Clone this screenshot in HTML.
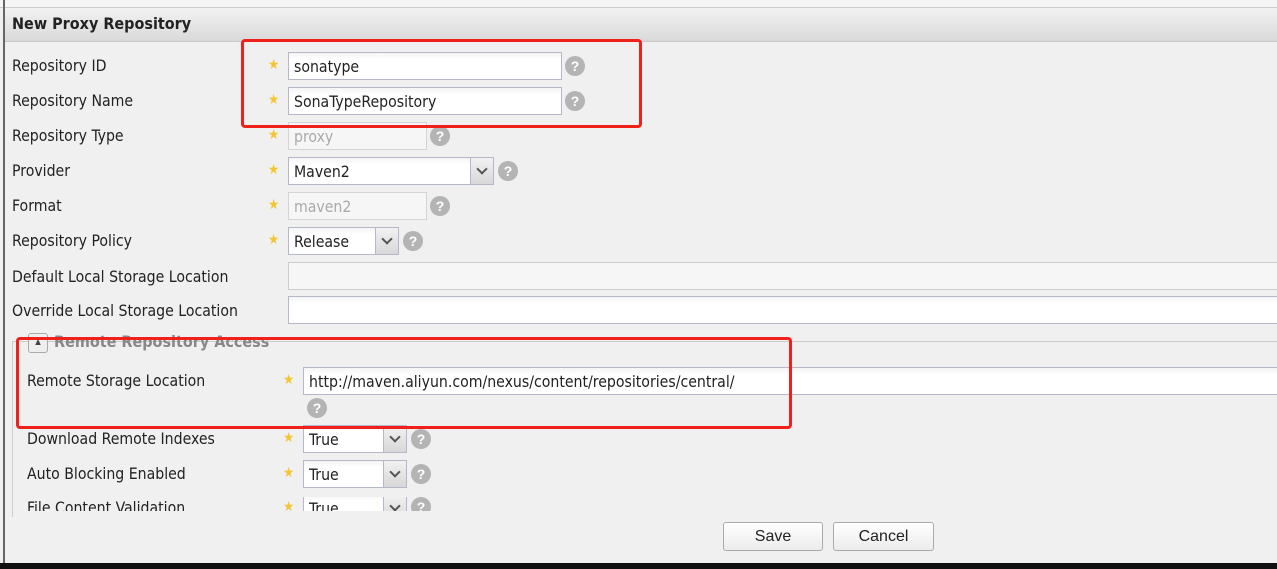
<!DOCTYPE html>
<html><head><style>
body{margin:0;width:1277px;height:569px;background:#f0f0f0;position:relative;overflow:hidden;font-family:"DejaVu Sans Condensed","Liberation Sans",sans-serif;font-size:15.7px;color:#222}
.a{position:absolute}
.lbl{position:absolute;left:12px;line-height:22px}
.star{position:absolute;color:#f2c531;font-size:14px;line-height:14px}
.inp{position:absolute;background:#fff;border:1px solid #b5b8c8;box-sizing:border-box;height:28px;padding-left:5px;line-height:27px;font-size:15.7px;background:linear-gradient(#f4f4f4,#fff 6px)}
.dis{color:#aaa;background:#f6f6f6;border-color:#d4d4d4}
.arr{position:absolute;top:0;right:0;width:22px;height:26px;background:linear-gradient(#f2f2f2,#d8d8d8);border-left:1px solid #b5b8c8}
.arr:after{content:"";position:absolute;left:7px;top:7px;width:6px;height:6px;border-right:2px solid #555;border-bottom:2px solid #555;transform:rotate(45deg)}
.help{position:absolute;width:20px;height:20px;border-radius:50%;background:#b4b4b4;color:#fff;font:bold 14px/20px "Liberation Sans",sans-serif;text-align:center}
.red{position:absolute;border:3px solid #f0201a;border-radius:4px;box-sizing:border-box}
.btn{position:absolute;top:522px;height:29px;border:1px solid #aaa;border-radius:3px;box-sizing:border-box;background:linear-gradient(#fff,#ececec);text-align:center;font:16px/27px "Liberation Sans",sans-serif;color:#222}
</style></head><body>
<div class="a" style="left:0;top:0;width:1277px;height:7px;background:#f5f5f5;border-bottom:1px solid #ccc"></div>
<div class="a" style="left:3px;top:0;width:2px;height:563px;background:#666"></div>
<div class="a" style="left:5px;top:8px;width:1272px;height:33px;background:linear-gradient(#f2f2f2,#d9d9d9);border-bottom:1px solid #c8c8c8"></div>
<div class="a" style="left:12px;top:14px;font:bold 16px/20px 'DejaVu Sans Condensed','Liberation Sans',sans-serif;color:#222">New Proxy Repository</div>

<div class="lbl" style="top:55px">Repository ID</div>
<div class="lbl" style="top:90px">Repository Name</div>
<div class="lbl" style="top:125px">Repository Type</div>
<div class="lbl" style="top:160px">Provider</div>
<div class="lbl" style="top:195px">Format</div>
<div class="lbl" style="top:230px">Repository Policy</div>
<div class="lbl" style="top:266px">Default Local Storage Location</div>
<div class="lbl" style="top:300px">Override Local Storage Location</div>

<div class="star" style="left:268px;top:58px">★</div>
<div class="star" style="left:268px;top:93px">★</div>
<div class="star" style="left:268px;top:128px">★</div>
<div class="star" style="left:268px;top:163px">★</div>
<div class="star" style="left:268px;top:198px">★</div>
<div class="star" style="left:268px;top:233px">★</div>

<div class="inp" style="left:288px;top:52px;width:274px">sonatype</div>
<div class="inp" style="left:288px;top:87px;width:274px">SonaTypeRepository</div>
<div class="inp dis" style="left:288px;top:122px;width:139px">proxy</div>
<div class="inp" style="left:288px;top:157px;width:206px">Maven2<div class="arr"></div></div>
<div class="inp dis" style="left:288px;top:192px;width:139px">maven2</div>
<div class="inp" style="left:288px;top:227px;width:111px">Release<div class="arr"></div></div>
<div class="inp" style="left:288px;top:262px;width:995px;background:#f6f6f6;border-color:#ccc"></div>
<div class="inp" style="left:288px;top:296px;width:995px"></div>

<div class="help" style="left:565px;top:56px">?</div>
<div class="help" style="left:565px;top:91px">?</div>
<div class="help" style="left:430px;top:126px">?</div>
<div class="help" style="left:498px;top:161px">?</div>
<div class="help" style="left:430px;top:196px">?</div>
<div class="help" style="left:403px;top:231px">?</div>

<div class="a" style="left:12px;top:341px;width:1270px;height:175px;border-left:1px solid #ccc;border-top:1px solid #ccc"></div>
<div class="a" style="left:28px;top:333px;width:18px;height:18px;border:1px solid #aaa;border-radius:3px;background:#eee;font-size:8px;text-align:center;line-height:16px;color:#444">▲</div>
<div class="a" style="left:54px;top:335px;height:17px;overflow:hidden"><div style="margin-top:-4px;font:bold 16px/22px 'DejaVu Sans Condensed','Liberation Sans',sans-serif;color:#888">Remote Repository Access</div></div>

<div class="lbl" style="left:27px;top:370px">Remote Storage Location</div>
<div class="lbl" style="left:27px;top:428px">Download Remote Indexes</div>
<div class="lbl" style="left:27px;top:463px">Auto Blocking Enabled</div>
<div class="a" style="left:0;top:497px;width:700px;height:14px;overflow:hidden">
<div class="lbl" style="left:27px;top:0">File Content Validation</div>
<div class="star" style="left:283px;top:3px">★</div>
<div class="inp" style="left:303px;top:-3px;width:104px">True<div class="arr"></div></div>
<div class="help" style="left:411px;top:0">?</div>
</div>
<div class="star" style="left:283px;top:373px">★</div>
<div class="star" style="left:283px;top:431px">★</div>
<div class="star" style="left:283px;top:466px">★</div>
<div class="inp" style="left:303px;top:367px;width:980px">http://maven.aliyun.com/nexus/content/repositories/central/</div>
<div class="help" style="left:307px;top:398px">?</div>
<div class="inp" style="left:303px;top:425px;width:104px">True<div class="arr"></div></div>
<div class="inp" style="left:303px;top:460px;width:104px">True<div class="arr"></div></div>
<div class="help" style="left:411px;top:429px">?</div>
<div class="help" style="left:411px;top:464px">?</div>

<div class="btn" style="left:723px;width:100px">Save</div>
<div class="btn" style="left:833px;width:101px">Cancel</div>

<div class="red" style="left:241px;top:39px;width:401px;height:89px"></div>
<div class="red" style="left:16px;top:337px;width:776px;height:92px"></div>

<div class="a" style="left:0;top:563px;width:1277px;height:6px;background:#111"></div>
</body></html>
